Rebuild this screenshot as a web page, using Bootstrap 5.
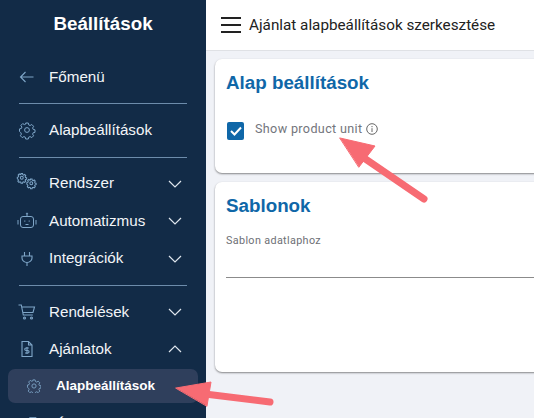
<!doctype html>
<html lang="hu"><head><meta charset="utf-8">
<link href="https://cdn.jsdelivr.net/npm/bootstrap@5.3.0/dist/css/bootstrap.min.css" rel="stylesheet">
<style>
html,body{height:418px;overflow:hidden}
body{background:#f0f2f7;font-family:"Liberation Sans",Arial,sans-serif;position:relative;width:534px}
.shell{height:418px;width:534px;overflow:hidden}
.side{width:206px;flex:0 0 206px;background:#122b47;color:#fff;height:418px;overflow:hidden}
.side-title{font-weight:700;font-size:18.8px;height:51px;line-height:48px;text-align:center;margin-bottom:7.300px}
.side-item{height:37.5px;display:flex;align-items:center;font-size:15.2px;color:#f2f5f8;padding-left:19px}
.side-item svg.ic{width:16px;height:16px;flex:none;margin-right:14px;color:#7fa6c8;overflow:visible}
.side-item .chev{width:14px;height:14px;margin-left:auto;margin-right:24px;color:#dfe6ee}
.side-sep{height:1px;background:#6d8cab;margin:7.200px 19px 7.500px}
.side-sep.wide{margin-top:8px;margin-bottom:7px}
.side-sub{height:34px;margin:.7px 8px 0;border-radius:7px;background:#2f3f5c;display:flex;align-items:center;font-size:13.5px;font-weight:700;padding-left:19px}
.side-sub svg{width:14px;height:14px;margin-right:15px;color:#7fa6c8;flex:none}
.main-col{flex:1;min-width:0}
.topbar{height:51px;background:#fff;border-bottom:1px solid #dfe1e5;display:flex;align-items:center;padding-left:15px;font-family:Roboto,sans-serif;font-size:15.25px;color:#222}
.burger{width:20px;height:16px;margin-right:8px;flex:none}
.panel{background:#fff;border-radius:7px;margin-left:9px;margin-right:-12px;box-shadow:0 1px 2px rgba(0,0,0,.45);border:0;padding:0 11px}
.panel h2{font-size:18.8px;font-weight:700;color:#0f67a8;margin:0}
.panel-a{height:114px;margin-top:8px;padding-top:13px}
.panel-b{height:190px;margin-top:9px;padding-top:13px}
.chk{width:17px;height:18px;background:#0f67a8;border-radius:2px;flex:none;display:flex;align-items:center;justify-content:center;margin-left:1px}
.chk-row{margin-top:27px;font-family:Roboto,sans-serif;font-size:12.6px;color:#73757c;letter-spacing:.35px}
.chk-row .lbl{margin-left:11px;margin-top:-3px}
.info{width:12px;height:12px;margin-left:3px;color:#666;vertical-align:-2px}
.fld-lbl{font-family:Roboto,sans-serif;font-size:10.8px;color:#6d6f75;letter-spacing:.35px;margin-top:15px}
.fld-line{height:1px;background:#8b8b8b;margin-top:28px}
.arrow{position:absolute;left:0;top:0;pointer-events:none}
</style></head><body>
<div class="d-flex shell">
<nav class="side">
<div class="side-title">Beállítások</div>
<div class="side-item"><svg class="ic" viewBox="0 0 16 16" fill="none" stroke="currentColor" stroke-width="1.100"><path d="M14.500 8H1.500M6.500 3l-5 5 5 5"/></svg>Főmenü</div>
<div class="side-sep"></div>
<div class="side-item"><svg class="ic" viewBox="0 0 16 16" fill="none" stroke="currentColor" stroke-width="1"><use href="#gear"/></svg>Alapbeállítások</div>
<div class="side-sep wide"></div>
<div class="side-item"><svg class="ic" viewBox="0 0 16 16" fill="none" stroke="currentColor" stroke-width="1.700"><g transform="translate(-2 -3) scale(.6)"><use href="#gear"/></g><g transform="translate(7.500 2.500) scale(.6)"><use href="#gear"/></g></svg>Rendszer<svg class="chev" viewBox="0 0 14 14" fill="none" stroke="currentColor" stroke-width="1.200"><path d="M1 4l6 6 6-6"/></svg></div>
<div class="side-item"><svg class="ic" viewBox="0 0 16 16" fill="none" stroke="currentColor" stroke-width="1"><rect x="1.500" y="3.500" width="13" height="11" rx="2.500"/><path d="M8 3.500V.5M-1 7v4.500M17 7v4.500M5.800 7.500v1.200M10.200 7.500v1.200M6.500 11.500h3"/><circle cx="8" cy="0.600" r=".6"/></svg>Automatizmus<svg class="chev" viewBox="0 0 14 14" fill="none" stroke="currentColor" stroke-width="1.200"><path d="M1 4l6 6 6-6"/></svg></div>
<div class="side-item"><svg class="ic" viewBox="0 0 16 16" fill="none" stroke="currentColor" stroke-width="1.100"><path d="M5.500 1v4M10.500 1v4M3 5h10v2a5 4.500 0 0 1-10 0ZM8 11.500V15"/></svg>Integrációk<svg class="chev" viewBox="0 0 14 14" fill="none" stroke="currentColor" stroke-width="1.200"><path d="M1 4l6 6 6-6"/></svg></div>
<div class="side-sep"></div>
<div class="side-item"><svg class="ic" viewBox="0 0 16 16" fill="none" stroke="currentColor" stroke-width="1.100"><path d="M-.5 1h2.800l2 10h9.500M3 3h12.500l-1.500 5.500H4.200"/><circle cx="5.500" cy="14" r="1"/><circle cx="12.500" cy="14" r="1"/></svg>Rendelések<svg class="chev" viewBox="0 0 14 14" fill="none" stroke="currentColor" stroke-width="1.200"><path d="M1 4l6 6 6-6"/></svg></div>
<div class="side-item"><svg class="ic" viewBox="0 0 16 16" fill="none" stroke="currentColor" stroke-width="1.100"><path d="M3 .5h6.500l3.500 3.500v11.500H3ZM9.500 .5V4H13"/><path d="M9.800 7H7a1.200 1.200 0 0 0 0 2.500h1.800a1.200 1.200 0 0 1 0 2.500H6M8 6v7"/></svg>Ajánlatok<svg class="chev" viewBox="0 0 14 14" fill="none" stroke="currentColor" stroke-width="1.200"><path d="M1 10l6-6 6 6"/></svg></div>
<div class="side-sub"><svg viewBox="0 0 16 16" fill="none" stroke="currentColor" stroke-width="1"><use href="#gear"/></svg>Alapbeállítások</div>
<div class="side-sub bg-transparent mt-1"><svg viewBox="0 0 16 16" fill="none" stroke="currentColor" stroke-width="1"><path d="M3 .5h7l3.500 3.500v11.500H3ZM10 .5V4h3.500"/></svg>Árajánlat állapot</div>
</nav>
<div class="main-col">
<header class="topbar"><svg class="burger" viewBox="0 0 20 16"><path d="M0 1h20M0 8h20M0 15h20" stroke="#222" stroke-width="2"/></svg>Ajánlat alapbeállítások szerkesztése</header>
<section class="panel panel-a"><h2>Alap beállítások</h2>
<div class="chk-row d-flex align-items-center"><span class="chk"><svg width="12" height="10" viewBox="0 0 12 10" fill="none" stroke="#fff" stroke-width="2"><path d="M1 5l3.500 3.500L11 1.500"/></svg></span><span class="lbl">Show product unit<svg class="info" viewBox="0 0 12 12" fill="none" stroke="currentColor"><circle cx="6" cy="6" r="5.300"/><path d="M6 5.200V9M6 3v1.200"/></svg></span></div>
</section>
<section class="panel panel-b"><h2>Sablonok</h2>
<div class="fld-lbl">Sablon adatlaphoz</div><div class="fld-line"></div></section>
</div>
</div>
<svg width="0" height="0" class="d-none"><defs><g id="gear"><circle cx="8" cy="8" r="2.400"/><path d="M6.700 1h2.600l.4 1.900 1.400.6 1.700-1 1.800 1.800-1 1.700.6 1.400 1.800.4v2.500l-1.800.4-.6 1.400 1 1.700-1.800 1.800-1.700-1-1.400.6-.4 1.800H6.700l-.4-1.800-1.400-.6-1.700 1-1.800-1.800 1-1.700-.6-1.400L.5 9.400V6.900l1.800-.4.6-1.400-1-1.700 1.800-1.800 1.700 1 1.400-.6Z"/></g></defs></svg>
<svg class="arrow" width="534" height="418" viewBox="0 0 534 418"><g fill="#f76b73" stroke="#f76b73" stroke-linejoin="round" stroke-linecap="round"><path d="M340 138 375 146 359 167Z" stroke-width="1"/><path d="M364 158 424 199" fill="none" stroke-width="7"/><path d="M176 388 211 382 207 406Z" stroke-width="1"/><path d="M205 394 270 402" fill="none" stroke-width="7"/></g></svg>
</body></html>
